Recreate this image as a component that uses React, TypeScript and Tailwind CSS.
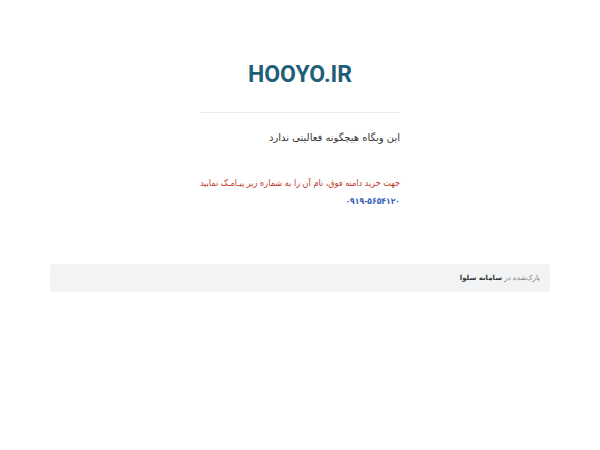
import React from "react";

export default function App() {
  return (
    <div className="min-h-[450px] w-[600px] bg-white font-['DejaVu_Sans',sans-serif]">
      <div className="mx-auto w-[200px] pt-[60px]">
        <h1 className="text-center font-['Roboto',sans-serif] text-[23px] font-bold leading-[30px] text-[#1f5f7a]">
          HOOYO.IR
        </h1>
        <div className="mt-[22px] h-px bg-[#ececec]" />
        <div dir="rtl" className="mt-[17px] text-right">
          <p className="text-[10px] leading-[16px] text-[#333]">این وبگاه هیچگونه فعالیتی ندارد</p>
          <p className="mt-[29px] whitespace-nowrap font-['DejaVu_Sans_Condensed','DejaVu_Sans',sans-serif] text-[9px] leading-[16px] text-[#c0392b]">
            جهت خرید دامنه فوق، نام آن را به شماره زیر پیـامـک نمایید
          </p>
          <p className="mt-[2px] font-['DejaVu_Sans_Condensed','DejaVu_Sans',sans-serif] text-[8.5px] font-bold leading-[16px] text-[#3562b8]">
            ۰۹۱۹-۵۶۵۴۱۲۰
          </p>
        </div>
      </div>
      <div className="mx-[50px] mt-[55px] rounded-[4px] bg-[#f2f3f5] px-[10px] py-[6px]" dir="rtl">
        <p className="text-[7px] leading-[16px] text-[#777]">
          پارک‌شده در <span className="font-bold text-[#333]">سامانه سلوا</span>
        </p>
      </div>
    </div>
  );
}
